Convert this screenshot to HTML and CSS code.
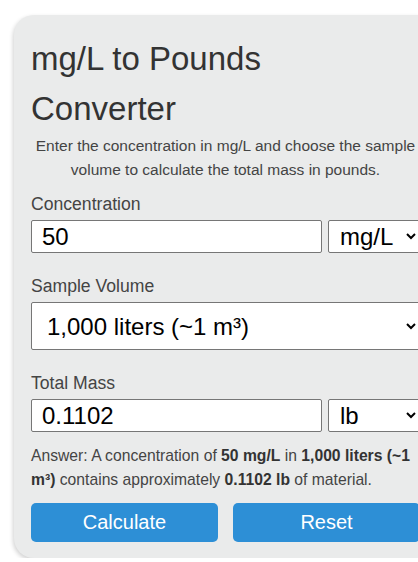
FILE: index.html
```html
<!DOCTYPE html>
<html lang="en">
<head>
<meta charset="UTF-8">
<meta name="viewport" content="width=device-width, initial-scale=1.0">
<title>mg/L to Pounds Converter</title>
<link rel="stylesheet" href="styles.css">
</head>
<body>

<div id="wrapper">

<div id="app" class="converter">
    <h1 class="converter-title">mg/L to Pounds Converter</h1>
    <p class="converter-intro">Enter the concentration in mg/L and choose the sample volume to calculate the total mass in pounds.</p>

    <div class="field">
        <label class="field-label" for="concentration">Concentration</label>
        <div class="field-row">
            <input id="concentration" class="field-input" type="text" value="50">
            <select class="field-unit">
                <option>mg/L</option>
                <option>g/L</option>
                <option>ppm</option>
            </select>
        </div>
    </div>

    <div class="field">
        <label class="field-label" for="volume">Sample Volume</label>
        <select id="volume" class="field-select">
            <option>1,000 liters (~1 m³)</option>
            <option>100 liters</option>
            <option>1 liter</option>
        </select>
    </div>

    <div class="field field-last">
        <label class="field-label" for="mass">Total Mass</label>
        <div class="field-row">
            <input id="mass" class="field-input" type="text" value="0.1102">
            <select class="field-unit">
                <option>lb</option>
                <option>kg</option>
                <option>g</option>
            </select>
        </div>
    </div>

    <p class="converter-answer">Answer: A concentration of <b>50 mg/L</b> in <b>1,000 liters (~1 m³)</b> contains approximately <b>0.1102 lb</b> of material.</p>

    <div class="converter-buttons">
        <button class="converter-button">Calculate</button>
        <button class="converter-button">Reset</button>
    </div>
</div>

</div>

</body>
</html>
```

FILE: styles.css
```css
html {
    box-sizing: border-box;
    overflow: hidden;
  }

  *, *:before, *:after {
    box-sizing: inherit;
  }

  body {
    margin: 0;
    font: 16px 'Liberation Sans', Arial, sans-serif;
    background: white;
    overflow: hidden;
  }

  #wrapper {
    padding: 15px 0 0 14px;
  }

  #app {
    width: 423px;
  }

  .converter {
    background: #eaebeb;
    border-radius: 20px;
    padding: 19px 17px 16px 17px;
    box-shadow: -1px 2px 4px rgba(0,0,0,0.18);
  }

  .converter-title {
    margin: 0;
    max-width: 360px;
    font-size: 33px;
    font-weight: normal;
    line-height: 50px;
    color: #333;
  }

  .converter-intro {
    margin: 0 0 12px 0;
    font-size: 15.5px;
    line-height: 24px;
    text-align: center;
    color: #444;
  }

  .field {
    margin-bottom: 23px;
  }

  .field-last {
    margin-bottom: 12px;
  }

  .field-label {
    display: block;
    font-size: 17.6px;
    color: #444;
    margin-bottom: 5px;
  }

  .field-row {
    display: flex;
    gap: 6px;
  }

  .field-input,
  .field-unit,
  .field-select {
    font-family: inherit;
    font-size: 24px;
    color: black;
    background: white;
    border: 1px solid #767676;
    border-radius: 2px;
  }

  .field-input {
    flex: 1;
    min-width: 0;
    height: 33px;
    padding: 1px 10px;
  }

  .field-unit {
    width: 92px;
    height: 33px;
    padding: 0 4px 0 7px;
  }

  .field-select {
    display: block;
    width: 100%;
    height: 48px;
    padding: 0 4px 0 11px;
  }

  .converter-answer {
    margin: 0 0 11px 0;
    font-size: 15.7px;
    line-height: 24px;
    color: #444;
  }

  .converter-answer b {
    color: #333;
  }

  .converter-buttons {
    display: flex;
    gap: 15px;
  }

  .converter-button {
    flex: 1;
    height: 39px;
    padding: 0;
    border: none;
    border-radius: 5px;
    background: #2d8fd6;
    color: white;
    font-family: inherit;
    font-size: 20px;
    cursor: pointer;
  }
```
